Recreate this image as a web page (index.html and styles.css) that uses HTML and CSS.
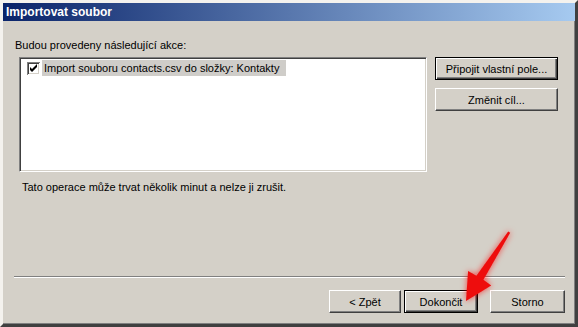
FILE: index.html
```html
<html>
    <head>
        <title>Importovat soubor</title>
        <link rel="stylesheet" href="styles.css">
    </head>
    <body>
        <div class="window">
            <div class="titlebar">Importovat soubor</div>
            <div class="content">
                <div class="label">Budou provedeny následující akce:</div>
                <div class="row">
                    <div class="listbox">
                        <div class="item">
                            <svg class="check" width="13" height="13" viewBox="0 0 13 13" shape-rendering="crispEdges">
                                <path d="M0.5 12.5V0.5H12.5" fill="none" stroke="#808080"/>
                                <path d="M1.5 11.5V1.5H11.5" fill="none" stroke="#404040"/>
                                <path d="M0.5 12.5H12.5V0.5" fill="none" stroke="#ffffff"/>
                                <path d="M1.5 11.5H11.5V1.5" fill="none" stroke="#d4d0c8"/>
                                <rect x="2" y="2" width="9" height="9" fill="#ffffff"/>
                                <polygon points="3,5 5,7 10,2 10,5 5,10 3,8" fill="#000" shape-rendering="geometricPrecision"/>
                            </svg>
                            <span class="item-text">Import souboru contacts.csv do složky: Kontakty</span>
                        </div>
                    </div>
                    <div class="side">
                        <button class="btn default wide">Připojit vlastní pole...</button>
                        <button class="btn wide">Změnit cíl...</button>
                    </div>
                </div>
                <div class="note">Tato operace může trvat několik minut a nelze ji zrušit.</div>
                <div class="separator"></div>
                <div class="footer">
                    <button class="btn back">&lt; Zpět</button>
                    <button class="btn default finish">Dokončit</button>
                    <button class="btn cancel">Storno</button>
                </div>
            </div>
            <svg class="arrow" width="578" height="327" viewBox="0 0 578 327">
                <defs>
                    <filter id="glow" x="-50%" y="-50%" width="200%" height="200%">
                        <feGaussianBlur in="SourceAlpha" stdDeviation="3" result="blur"/>
                        <feFlood flood-color="#ff1010" flood-opacity="0.7"/>
                        <feComposite in2="blur" operator="in" result="shadow"/>
                        <feMerge>
                            <feMergeNode in="shadow"/>
                            <feMergeNode in="SourceGraphic"/>
                        </feMerge>
                    </filter>
                </defs>
                <polygon filter="url(#glow)" fill="#ee0d0d" points="508.2,231.5 510.2,232.7 483.4,279.8 491.2,285.5 466,301 468.1,271.0 476.4,275.8"/>
            </svg>
        </div>
    </body>
</html>
```

FILE: styles.css
```css
body {
    margin: 0;
    background-color: #d4d0c8;
    font-family: "Liberation Sans", Arial, sans-serif;
    font-size: 11px;
    color: #000;
}
.window {
    position: relative;
    width: 578px;
    height: 327px;
    box-sizing: border-box;
    display: flex;
    flex-direction: column;
    background-color: #d4d0c8;
    border-style: solid;
    border-width: 3px;
    border-color: #f4f2ee #404040 #404040 #f4f2ee;
    box-shadow: inset -1px -1px #808080;
}
.titlebar {
    height: 18px;
    line-height: 18px;
    padding-left: 3px;
    color: #fff;
    font-weight: bold;
    font-size: 12px;
    background: linear-gradient(to right, #0a246a, #a6caf0);
}
.content {
    flex: 1;
    display: flex;
    flex-direction: column;
    padding: 18px 10px 11px 12px;
}
.label {
    line-height: 13px;
}
.row {
    display: flex;
    gap: 8px;
    margin-top: 5px;
    margin-left: 4px;
}
.listbox {
    width: 408px;
    height: 115px;
    box-sizing: border-box;
    background-color: #fff;
    border-style: solid;
    border-width: 1px;
    border-color: #808080 #fff #fff #808080;
    box-shadow: inset 1px 1px #404040, inset -1px -1px #d4d0c8;
    padding: 2px 0 0 7px;
}
.item {
    display: flex;
    align-items: center;
    height: 16px;
    gap: 2px;
}
.check {
    display: block;
}
.item-text {
    background-color: #cfcdc9;
    line-height: 16px;
    padding: 0 7px 0 2px;
}
.side {
    display: flex;
    flex-direction: column;
    gap: 8px;
}
.btn {
    height: 23px;
    box-sizing: border-box;
    font-family: "Liberation Sans", Arial, sans-serif;
    font-size: 11px;
    color: #000;
    background-color: #d4d0c8;
    border-style: solid;
    border-width: 1px;
    border-color: #fff #404040 #404040 #fff;
    box-shadow: inset -1px -1px #808080;
    padding: 0;
}
.btn.default {
    border: 1px solid #000;
    box-shadow: inset 1px 1px #fff, inset -1px -1px #404040, inset -2px -2px #808080;
}
.wide {
    width: 123px;
}
.note {
    margin-top: 9px;
    margin-left: 7px;
    line-height: 13px;
}
.separator {
    margin-top: auto;
    margin-left: -1px;
    border-top: 1px solid #808080;
    border-bottom: 1px solid #fff;
    height: 0;
}
.footer {
    display: flex;
    justify-content: flex-end;
    margin-top: 12px;
}
.back {
    width: 72px;
}
.finish {
    width: 74px;
    margin-left: 3px;
}
.cancel {
    width: 75px;
    margin-left: 12px;
}
.arrow {
    position: absolute;
    top: -3px;
    left: -3px;
    pointer-events: none;
}
```
